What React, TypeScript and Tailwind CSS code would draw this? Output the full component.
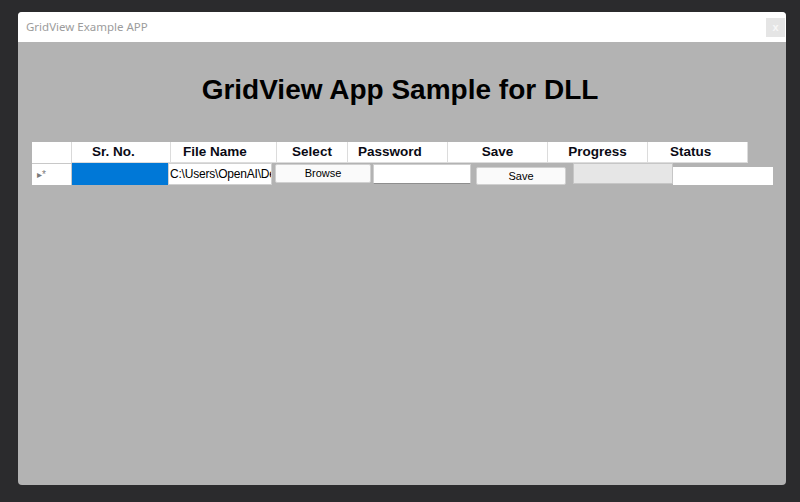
import React from "react";

const headers = [
  { label: "Sr. No.", w: "w-[99px]", align: "pl-[20px]" },
  { label: "File Name", w: "w-[106px]", align: "pl-[12px]" },
  { label: "Select", w: "w-[71px]", align: "justify-center" },
  { label: "Password", w: "w-[100px]", align: "pl-[10px]" },
  { label: "Save", w: "w-[100px]", align: "justify-center" },
  { label: "Progress", w: "w-[100px]", align: "justify-center" },
  { label: "Status", w: "w-[100px]", align: "pl-[22px]" },
];

export default function App() {
  return (
    <div className="w-[800px] h-[502px] bg-[#2b2b2d] pt-[12px] pl-[18px]">
      <div className="w-[768px] h-[473px] rounded-[4px] overflow-hidden flex flex-col bg-[#b3b3b3]">
        {/* title bar */}
        <div className="h-[30px] bg-white flex items-center justify-between pl-[8px] pr-[1px] shrink-0">
          <span className="text-[11.5px] text-[#9c9c9c] font-['Noto_Sans',sans-serif] leading-none">
            GridView Example APP
          </span>
          <div className="w-[19px] h-[19px] bg-[#e5e5e5] flex items-center justify-center text-[11px] font-bold text-[#f7f7f7] font-['Liberation_Sans',sans-serif]">
            x
          </div>
        </div>

        <div className="flex-1 flex flex-col font-['Liberation_Sans',Arial,sans-serif]">
          <h1 className="text-[28px] leading-[32px] font-bold text-black text-center pt-[32px] pr-[4px]">
            GridView App Sample for DLL
          </h1>

          <div className="mt-[36px] pl-[14px]">
            {/* header row */}
            <div className="flex h-[21px]">
              <div className="w-[40px] bg-white border-r border-[#d9d9d9]" />
              {headers.map((h) => (
                <div
                  key={h.label}
                  className={`${h.w} bg-white border-r border-b border-[#dcdcdc] flex items-center ${h.align} pt-[1px] text-[13.5px] font-bold text-[#0a0a14]`}
                >
                  {h.label}
                </div>
              ))}
            </div>

            {/* data row */}
            <div className="flex items-start h-[22px]">
              <div className="w-[40px] h-[22px] bg-white border-r border-t border-[#c8c8c8] flex items-center pl-[5px] text-[10px] text-[#7a7a7a] leading-none">
                ▸*
              </div>
              <div className="w-[96px] h-[22px] bg-[#0078d7]" />
              <div className="w-[104px] h-[22px] bg-white border border-[#d0d0d0] overflow-hidden whitespace-nowrap text-[12px] leading-[20px] text-black pl-[1px] tracking-[-0.2px]">
                C:\Users\OpenAI\De
              </div>
              <div className="ml-[3px] mt-[1px] w-[96px] h-[19px] bg-[#fafafa] border border-[#d0d0d0] rounded-[2px] flex items-center justify-center text-[11px] text-black">
                Browse
              </div>
              <div className="ml-[2px] mt-[1px] w-[98px] h-[20px] bg-white border border-[#cfcfcf] border-b-[#8e8e8e]" />
              <div className="ml-[5px] mt-[4px] w-[90px] h-[18px] bg-[#fafafa] border border-[#d0d0d0] rounded-[2px] flex items-center justify-center text-[11px] text-black">
                Save
              </div>
              <div className="ml-[7px] w-[100px] h-[21px] bg-[#e6e6e6] border border-[#c6c6c6]" />
              <div className="mt-[4px] w-[100px] h-[18px] bg-white" />
            </div>
          </div>
        </div>
      </div>
    </div>
  );
}
